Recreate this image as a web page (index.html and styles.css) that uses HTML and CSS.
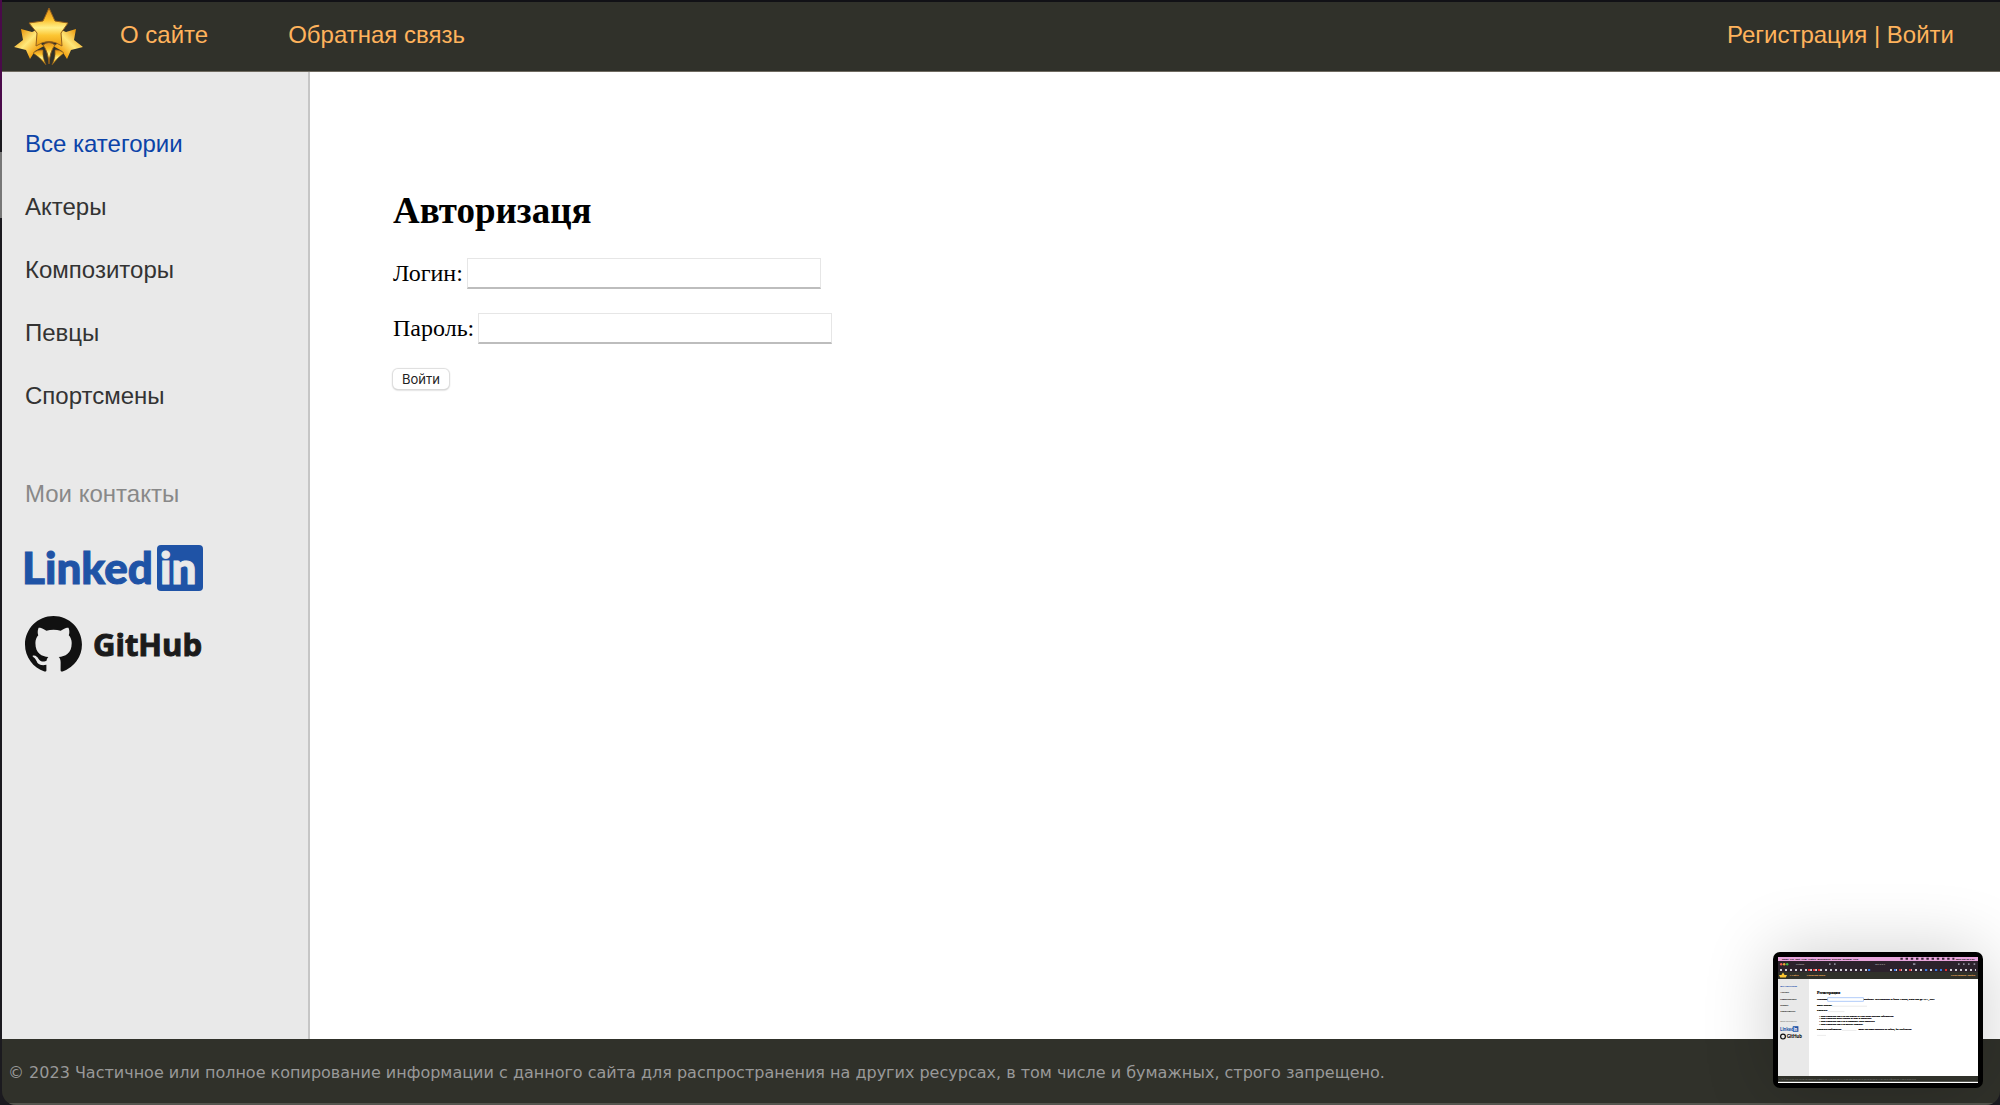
FILE: index.html
```html
<!DOCTYPE html>
<html lang="ru">
<head>
<meta charset="utf-8">
<title>Авторизация</title>
<link rel="stylesheet" href="styles.css">
</head>
<body>
<div class="window">
  <header class="header">
    <a class="logo" href="#" aria-label="Главная">
      <svg viewBox="0 0 70 58" width="70" height="58">
        <defs>
          <linearGradient id="gold" x1="0" y1="0" x2="0" y2="1">
            <stop offset="0" stop-color="#e0901c"/><stop offset=".3" stop-color="#fcc02a"/><stop offset=".52" stop-color="#fff08a"/><stop offset=".72" stop-color="#fcc633"/><stop offset="1" stop-color="#eb9c12"/>
          </linearGradient>
          <linearGradient id="goldLeft" x1="0" y1="0" x2="1" y2="1">
            <stop offset=".15" stop-color="#eb9c12"/><stop offset=".45" stop-color="#ffe87a"/><stop offset=".75" stop-color="#f3a312"/>
          </linearGradient>
          <linearGradient id="goldRight" x1="1" y1="0" x2="0" y2="1">
            <stop offset=".15" stop-color="#eb9c12"/><stop offset=".45" stop-color="#ffe87a"/><stop offset=".75" stop-color="#f3a312"/>
          </linearGradient>
        </defs>
        <path d="M7 21 L18 24 L25 21 L27 36 L30 38 L21 43 L16 51 L12 42 L0 39 L9 32Z" fill="url(#goldLeft)"/>
        <path d="M62 21 L52 24 L45 21 L43 36 L39 38 L48 43 L53 51 L57 42 L69 39 L60 32Z" fill="url(#goldRight)"/>
        <path d="M19 45 Q24 41 29 42 Q28 49 32 57 Q26 49 19 45Z" fill="url(#gold)" stroke="#8a5a1a" stroke-width=".6"/>
        <path d="M50 45 Q45 41 41 42 Q42 49 38 57 Q44 49 50 45Z" fill="url(#gold)" stroke="#8a5a1a" stroke-width=".6"/>
        <path d="M29 37 Q35 32 41 37 Q36 43 35 56 Q34 43 29 37Z" fill="url(#gold)" stroke="#8a5a1a" stroke-width="1"/>
        <path d="M35 0 L41 13 L54 15 L47 25 L48 38 Q35 29 22 38 L23 25 L15 15 L29 13Z" fill="url(#gold)" stroke="#94601c" stroke-width="1"/>
      </svg>
    </a>
    <nav class="menu">
      <a href="#">О сайте</a>
      <a href="#">Обратная связь</a>
    </nav>
    <div class="account"><a href="#">Регистрация</a> | <a href="#">Войти</a></div>
  </header>

  <div class="body">
    <aside class="sidebar">
      <ul class="categories">
        <li class="current">Все категории</li>
        <li><a href="#">Актеры</a></li>
        <li><a href="#">Композиторы</a></li>
        <li><a href="#">Певцы</a></li>
        <li><a href="#">Спортсмены</a></li>
      </ul>
      <p class="contacts-title">Мои контакты</p>
      <a class="contact" href="#" aria-label="LinkedIn">
        <svg viewBox="0 -5 180 57" width="180" height="57">
          <text class="linkedin-word" x="-3" y="39">Linked</text>
          <rect x="132" width="46" height="46" rx="4" fill="#1f53a6"/>
          <text class="linkedin-in" x="135" y="39">in</text>
        </svg>
      </a>
      <a class="contact" href="#" aria-label="GitHub">
        <svg viewBox="0 0 180 57" width="180" height="57">
          <path transform="scale(3.56)" fill="#111" d="M8 0C3.58 0 0 3.58 0 8c0 3.54 2.29 6.53 5.47 7.59.4.07.55-.17.55-.38 0-.19-.01-.82-.01-1.49-2.01.37-2.53-.49-2.69-.94-.09-.23-.48-.94-.82-1.13-.28-.15-.68-.52-.01-.53.63-.01 1.08.58 1.23.82.72 1.21 1.87.87 2.33.66.07-.52.28-.87.51-1.07-1.78-.2-3.64-.89-3.64-3.95 0-.87.31-1.59.82-2.15-.08-.2-.36-1.02.08-2.12 0 0 .67-.21 2.2.82.64-.18 1.32-.27 2-.27s1.36.09 2 .27c1.53-1.04 2.2-.82 2.2-.82.44 1.1.16 1.92.08 2.12.51.56.82 1.27.82 2.15 0 3.07-1.87 3.75-3.65 3.95.29.25.54.73.54 1.48 0 1.07-.01 1.93-.01 2.2 0 .21.15.46.55.38A8.01 8.01 0 0 0 16 8c0-4.42-3.58-8-8-8z"/>
          <text class="github-word" x="68" y="40">GitHub</text>
        </svg>
      </a>
    </aside>

    <main class="content">
      <h1>Авторизаця</h1>
      <form class="login">
        <p><label for="username">Логин:</label> <input id="username" type="text"></p>
        <p><label for="password">Пароль:</label> <input id="password" type="password"></p>
        <button type="button">Войти</button>
      </form>
    </main>
  </div>

  <footer class="footer">© 2023 Частичное или полное копирование информации с данного сайта для распространения на других ресурсах, в том числе и бумажных, строго запрещено.</footer>
</div>

<div class="preview">
  <svg viewBox="0 0 1000 630" width="200" height="126">
    <rect width="1000" height="630" fill="#fff"/>
    <rect width="1000" height="20" fill="#e8a5dc"/>
    <rect y="20" width="1000" height="55" fill="#2c222c"/>
    <rect y="75" width="1000" height="35" fill="#30312a"/>
    <rect y="110" width="155" height="485" fill="#e9e9e9"/>
    <rect y="595" width="1000" height="29" fill="#30312a"/>
    <path d="M612 9h270" stroke="#3a2438" stroke-width="10" stroke-dasharray="12 14"/>
    <circle cx="16" cy="36" r="6" fill="#f25a52"/><circle cx="31" cy="36" r="6" fill="#e5b032"/><circle cx="46" cy="36" r="6" fill="#43b649"/>
    <path d="M255 36h8M280 36h8M675 36h12M900 36h8M925 36h8M950 36h8M978 36h8" stroke="#8c8a98" stroke-width="9"/>
    <path d="M10 65h450M560 65h430" stroke="#d4d2da" stroke-width="10" stroke-dasharray="10 15"/>
    <path d="M150 65h60M606 65h10M656 65h10M835 65h10" stroke="#e03030" stroke-width="11" stroke-dasharray="11 14"/>
    <path d="M450 65h12M580 65h10M735 65h12M785 65h35" stroke="#3e7ce0" stroke-width="11" stroke-dasharray="11 14"/>
    <path d="M25 78l8 12h12l-6 12h-28l-6-12h12z" fill="#fcc633"/>
    <g class="mini-sans">
      <text x="20" y="13">Safari&#160; File&#160; Edit&#160; View&#160; History&#160; Bookmarks&#160; Develop&#160; Window&#160; Help</text>
      <text x="890" y="13">Mon Jun 26 9:21</text>
      <text x="90" y="40" fill="#aaa">Python</text><text x="485" y="40" fill="#aaa">127.0.0.1</text>
      <text x="58" y="96" fill="#ffb45a">О сайте</text><text x="143" y="96" fill="#ffb45a">Обратная связь</text><text x="865" y="96" fill="#ffb45a">Регистрация | Войти</text>
      <text x="11" y="150" fill="#0b43a8">Все категории</text><text x="11" y="181">Актеры</text><text x="11" y="213">Композиторы</text><text x="11" y="244">Певцы</text><text x="11" y="276">Спортсмены</text><text x="11" y="325" fill="#888">Мои контакты</text>
    </g>
    <text class="mini-footer" x="5" y="613">© 2023 Частичное или полное копирование информации с данного сайта для распространения на других ресурсах, в том числе и бумажных, строго запрещено.</text>
    <text class="mini-brand" x="10" y="370" fill="#1f53a6">Linked</text><rect x="74" y="346" width="28" height="28" fill="#1f53a6"/><text class="mini-brand" x="77" y="370" fill="#fff">in</text>
    <circle cx="25" cy="398" r="12" fill="none" stroke="#111" stroke-width="6"/><text class="mini-brand" x="44" y="406">GitHub</text>
    <g class="mini-serif">
      <text class="mini-title" x="195" y="187">Регистрация</text>
      <text x="195" y="216">Username:</text><rect x="249" y="204" width="178" height="17" fill="#fff" stroke="#7faaf5" stroke-width="3"/><text x="430" y="216">Required. 150 characters or fewer. Letters, digits and @/./+/-/_ only.</text>
      <text x="195" y="244">Email address:</text><path d="M270 246h175M250 273h82M320 367h72M195 392h45" stroke="#ddd" stroke-width="3"/><text x="195" y="271">Password:</text>
      <text x="206" y="298">• Your password can’t be too similar to your other personal information.</text><text x="206" y="312">• Your password must contain at least 8 characters.</text><text x="206" y="326">• Your password can’t be a commonly used password.</text><text x="206" y="340">• Your password can’t be entirely numeric.</text>
      <text x="195" y="365">Password confirmation:</text><text x="402" y="365">Enter the same password as before, for verification.</text>
    </g>
  </svg>
</div>
</body>
</html>
```
FILE: styles.css
```css
* { box-sizing: border-box; }
body {
  margin: 0; font-family: "Liberation Sans", Arial, sans-serif;
  background: linear-gradient(#4a0a4a 120px, #1b1a1f 120px 152px, #777 152px 218px, #1b1a1f 218px);
}
a { color: inherit; text-decoration: none; }
svg { display: block; overflow: visible; }

.window {
  display: flex; flex-direction: column; min-height: 100vh; margin-left: 2px;
  border-top: 2px solid #111116;
  border-bottom-left-radius: 14px; border-bottom-right-radius: 14px;
  overflow: hidden;
}
.header {
  display: flex; align-items: center; height: 70px; padding: 0 46px 0 12px;
  background: #30312a; border-bottom: 1px solid #6e6a60; color: #ffb35c; font-size: 24px;
}
.menu { display: flex; flex: 1; gap: 80px; margin-left: 36px; }
.menu, .account { padding-bottom: 3px; }

.body { display: flex; flex: 1; background: #fff; }
.sidebar { flex: 0 0 308px; padding: 40px 23px; background: #e9e9e9; border-right: 2px solid #c6c6c6; font-size: 24px; }
.categories { margin: 0; padding: 0; list-style: none; color: #333; }
.categories li { line-height: 63px; }
.categories .current { color: #0b43a8; }
.contacts-title { margin: 35px 0 15px; line-height: 63px; color: #888; }
.contact { display: block; margin-bottom: 19px; }
.linkedin-word, .linkedin-in { font: 900 44px Lato, sans-serif; fill: #1f53a6; stroke: #1f53a6; }
.linkedin-in { fill: #e9e9e9; stroke: #e9e9e9; }
.github-word { font: 700 31px "Open Sans", sans-serif; fill: #1b1b1b; stroke: #1b1b1b; }

.content { flex: 1; padding: 118px 83px; font-family: "Liberation Serif", "Times New Roman", serif; font-size: 24px; color: #000; }
h1 { margin: 0; font-size: 37px; line-height: 42px; }
.login p { display: flex; align-items: center; gap: 4px; margin: 0 0 24px; }
.login p:first-child { margin-top: 26px; }
.login input {
  width: 354px; height: 31px; padding: 2px 6px; font-size: 20px;
  border: 1px solid #e6e6e6; border-bottom: 2px solid #bdbdbd; background: #fff;
}
.login button {
  display: block; height: 20px; margin-top: 25px; padding: 0 9px; border: 0; border-radius: 5px; background: #fff;
  box-shadow: 0 0 1px 1px #ddd, 0 1px 2px #aaa; font: 13px Inter, sans-serif; color: #222;
}

.footer {
  height: 66px; padding: 0 6px; background: #30312a; border-bottom: 2px solid #55554e;
  font: 16px/68px "DejaVu Sans", Verdana, sans-serif; color: #999;
}

.preview {
  position: fixed; right: 17px; bottom: 17px; padding: 5px; overflow: hidden;
  border-radius: 7px; background: #000; box-shadow: 0 0 70px rgba(0, 0, 0, .2);
}
.mini-sans { font: 700 12px "Liberation Sans", sans-serif; }
.mini-serif { font: 13px "Liberation Serif", serif; stroke: #000; }
.mini-footer { font: 8px "DejaVu Sans", sans-serif; fill: #999; }
.mini-title { font-size: 20px; font-weight: 700; }
.mini-brand { font: 900 23px Lato, sans-serif; }
```
